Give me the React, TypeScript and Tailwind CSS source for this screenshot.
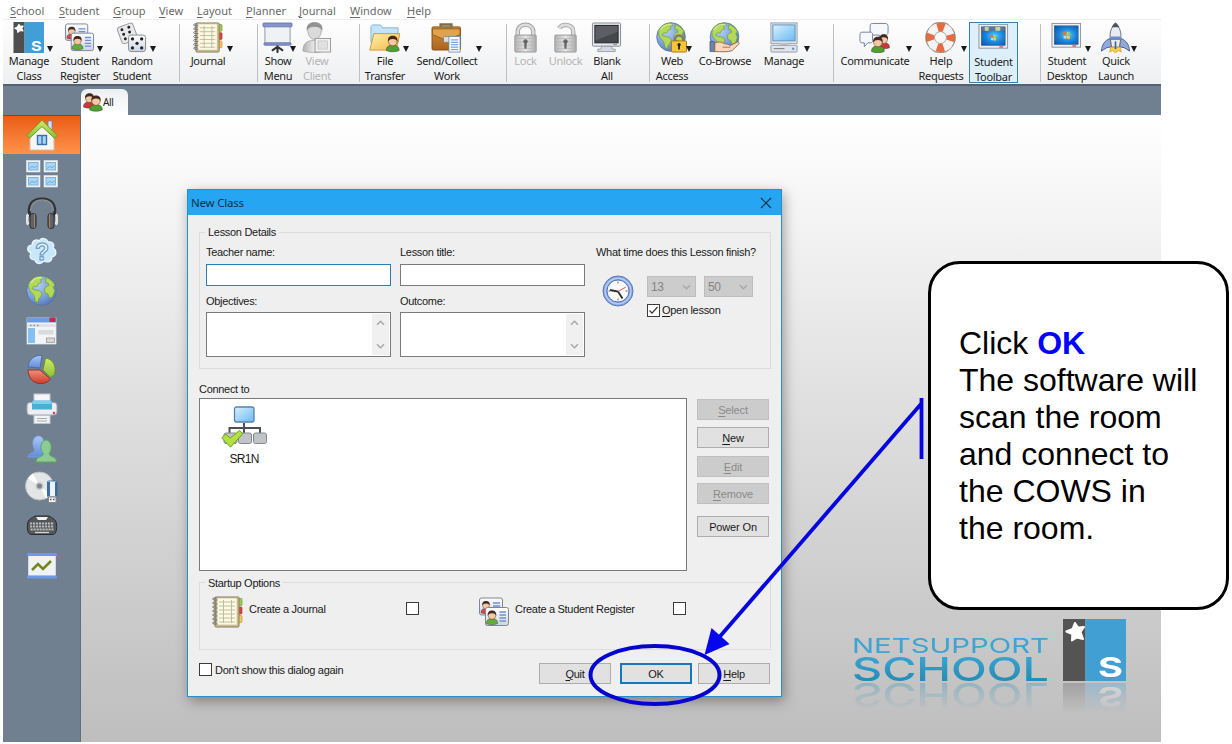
import React from "react";

type IconProps = { children: React.ReactNode; w?: number; h?: number; className?: string };

function Svg({ children, w = 32, h = 32, className = "" }: IconProps) {
  return (
    <svg width={w} height={h} viewBox={`0 0 ${w} ${h}`} className={`block shrink-0 ${className}`}>
      {children}
    </svg>
  );
}

function Defs() {
  return (
    <svg width="0" height="0" className="absolute">
      <defs>
        <radialGradient id="sea" cx="35%" cy="30%" r="75%">
          <stop offset="0" stopColor="#b4cff5" />
          <stop offset="0.6" stopColor="#7ba1e0" />
          <stop offset="1" stopColor="#5878bb" />
        </radialGradient>
        <linearGradient id="screen" x1="0" y1="0" x2="1" y2="1">
          <stop offset="0" stopColor="#d8f1ff" />
          <stop offset="1" stopColor="#6bb9ef" />
        </linearGradient>
        <radialGradient id="desk" cx="55%" cy="50%" r="70%">
          <stop offset="0" stopColor="#5cd0fb" />
          <stop offset="0.5" stopColor="#1a86dc" />
          <stop offset="1" stopColor="#0a55b0" />
        </radialGradient>
        <linearGradient id="folder" x1="0" y1="0" x2="1" y2="1">
          <stop offset="0" stopColor="#fff1b8" />
          <stop offset="1" stopColor="#f3b63c" />
        </linearGradient>
        <linearGradient id="leather" x1="0" y1="0" x2="0" y2="1">
          <stop offset="0" stopColor="#d99238" />
          <stop offset="1" stopColor="#a96420" />
        </linearGradient>
        <linearGradient id="metal" x1="0" y1="0" x2="1" y2="0">
          <stop offset="0" stopColor="#b2b2b2" />
          <stop offset="0.5" stopColor="#e6e6e6" />
          <stop offset="1" stopColor="#ababab" />
        </linearGradient>
        <linearGradient id="card" x1="0" y1="0" x2="0" y2="1">
          <stop offset="0" stopColor="#ffffff" />
          <stop offset="1" stopColor="#cbd5e6" />
        </linearGradient>
        <linearGradient id="lime" x1="0" y1="0" x2="0" y2="1">
          <stop offset="0" stopColor="#d0ec68" />
          <stop offset="1" stopColor="#8dbe37" />
        </linearGradient>
        <linearGradient id="bluefill" x1="0" y1="0" x2="0" y2="1">
          <stop offset="0" stopColor="#a9c6f7" />
          <stop offset="1" stopColor="#5f8cdb" />
        </linearGradient>
        <linearGradient id="redfill" x1="0" y1="0" x2="0" y2="1">
          <stop offset="0" stopColor="#f58f78" />
          <stop offset="1" stopColor="#c83c2c" />
        </linearGradient>
        <linearGradient id="logotext" x1="0" y1="0" x2="0" y2="1">
          <stop offset="0" stopColor="#3fa9d8" />
          <stop offset="1" stopColor="#1f85ae" />
        </linearGradient>
      </defs>
    </svg>
  );
}

function Head({ x, y, s = 1, shirt }: { x: number; y: number; s?: number; shirt: string }) {
  return (
    <g transform={`translate(${x} ${y}) scale(${s})`}>
      <path d="M-6 9c0-4 2.500-5 6-5S6 5 6 9c-3 1.600-9 1.600-12 0z" fill={shirt} stroke="#3c4a2c" strokeWidth="0.500" />
      <circle r="4" cy="0.600" fill="#f3c8a4" stroke="#6b3a20" strokeWidth="0.500" />
      <path d="M-4.400 1C-5-3.500-2.500-4.800 0-4.800s5 1.300 4.400 5.800C3.800-1 2.500-1.800 0-1.800S-3.800-1-4.400 1z" fill="#43291d" />
    </g>
  );
}

const GlobeBody = () => (
  <g>
    <circle cx="15.500" cy="15.500" r="14.800" fill="url(#sea)" stroke="#56749b" strokeWidth="0.800" />
    <path d="M3 8C6 3 10 1.300 15 1.200l2.500 2-3 1.500 1 2.500-3 1.300-1.500 3-3-.5-2 2.500 3 1.500 4 .5 3 3-1.500 3.500-2 2-.5 3.500-2.500-1-1.500-6-3-3.500C3 14.500 2 12 3 8z" fill="#b4d957" stroke="#6f9c37" strokeWidth="0.700" />
    <path d="M20 2.500c4 1.300 7.500 4 9 8l-2 1 1.800 4.500-2.300 6-3 1-1.500-4-3-1-.5-4 2.500-3 2-.5-1-2.500-2.500-.5z" fill="#b4d957" stroke="#6f9c37" strokeWidth="0.700" />
    <path d="M5 8c3-5 8-6 12-5" stroke="#fff" strokeWidth="1.200" opacity="0.450" fill="none" />
  </g>
);

const ClassIcon = () => (
  <Svg>
    <rect x="0.500" y="0" width="11.500" height="32" fill="#4e4e4e" />
    <rect x="12" y="0" width="20" height="32" fill="#419fd6" />
    <path d="M6 2.500l1.600 2 2.900-.4-1.500 2.500 1.300 2.700-3-.5L5 10.600l-.6-2.900-2.500-1.300 2.700-1.200z" fill="#fff" stroke="#fff" strokeWidth="1.200" strokeLinejoin="round" />
    <text x="18.500" y="30" fontFamily="Inter, 'Liberation Sans', sans-serif" fontSize="14" fontWeight="700" letterSpacing="0" fill="#fff" textLength="11" lengthAdjust="spacingAndGlyphs">S</text>
  </Svg>
);

const RegisterIcon = () => (
  <Svg>
    <rect x="1.500" y="2" width="23" height="17" rx="2" fill="url(#card)" stroke="#7f8794" />
    <Head x={8} y={9} s={0.85} shirt="#d9434c" />
    <path d="M15 7h7M15 10h7M15 13h7" stroke="#6f90cd" strokeWidth="1.300" />
    <rect x="7.500" y="11.500" width="23" height="18" rx="2" fill="url(#card)" stroke="#7f8794" />
    <Head x={14} y={19} s={0.95} shirt="#5fae3c" />
    <path d="M21.500 16h6.500M21.500 19h6.500M21.500 22h6.500M21.500 25h6.500" stroke="#6f90cd" strokeWidth="1.300" />
  </Svg>
);

const DiceIcon = () => (
  <Svg>
    <g transform="rotate(-20 11 11)">
      <rect x="3" y="3" width="17" height="18" rx="3" fill="#e9e9eb" stroke="#9a9a9a" />
      <g fill="#222">
        <circle cx="7.500" cy="6.500" r="1.500" /><circle cx="15" cy="6.500" r="1.500" /><circle cx="7.500" cy="11.500" r="1.500" /><circle cx="14" cy="11.500" r="1.500" /><circle cx="7.500" cy="16.500" r="1.500" />
      </g>
    </g>
    <rect x="13" y="13.500" width="17.500" height="17" rx="2.500" fill="url(#card)" stroke="#8b8b8b" />
    <g fill="#222">
      <circle cx="17" cy="17.500" r="1.700" /><circle cx="26.500" cy="17.500" r="1.700" /><circle cx="21.700" cy="22" r="1.700" /><circle cx="17" cy="26.800" r="1.700" /><circle cx="26.500" cy="26.800" r="1.700" />
    </g>
  </Svg>
);

const JournalIcon = () => (
  <Svg>
    <rect x="27" y="2.500" width="4" height="7" rx="1" fill="#9bd04f" stroke="#5d8c2a" strokeWidth="0.600" />
    <rect x="27" y="11" width="4" height="7" rx="1" fill="#d64540" stroke="#9c2b27" strokeWidth="0.600" />
    <rect x="27" y="19.500" width="4" height="7" rx="1" fill="#f4c95a" stroke="#b5872a" strokeWidth="0.600" />
    <rect x="4" y="1" width="24" height="30" rx="1" fill="#d0c295" stroke="#8a7c55" />
    <rect x="6" y="2" width="20" height="27" fill="#fdfae3" stroke="#b9b08f" strokeWidth="0.600" />
    <path d="M8 6h16M8 10h16M8 14h16M8 18h16M8 22h16M8 26h16M12.500 4v23M20.500 4v23" stroke="#b9b798" strokeWidth="0.900" />
    {[4, 8, 12, 16, 20, 24, 28].map((y) => (
      <path key={y} d={`M6.500 ${y}H2.500a1.200 1.200 0 0 1 0-2h3`} fill="none" stroke="#6b6b6b" strokeWidth="1" />
    ))}
  </Svg>
);

const EaselIcon = () => (
  <Svg>
    <rect x="3" y="3" width="26" height="19" fill="#eef2f4" stroke="#8f99a5" />
    <rect x="1" y="1" width="30" height="4" rx="1" fill="#8794ce" stroke="#5f6ba3" strokeWidth="0.800" />
    <rect x="2" y="21.500" width="28" height="2.500" rx="1" fill="#8794ce" stroke="#5f6ba3" strokeWidth="0.800" />
    <path d="M16 25v6M15.500 26l-4.500 3M16.500 26l4.500 3" stroke="#333" strokeWidth="2.200" fill="none" strokeLinecap="round" />
  </Svg>
);

const ViewIcon = () => (
  <Svg>
    <path d="M2 30c0-7 3-10 9-11h4c6 1 9 4 9 11-6 2-16 2-22 0z" fill="url(#metal)" stroke="#9c9c9c" strokeWidth="0.700" />
    <path d="M7 8c0-5 2.500-7.500 7-7.500S21 3 21 8c0 6-3 10-7 10S7 14 7 8z" fill="#dadada" stroke="#9a9a9a" strokeWidth="0.700" />
    <path d="M6 9C5 3 8.500.5 14 .5S23 3 22 9c-2-3-5-4-8-4S7.500 6 6 9z" fill="#929292" />
    <rect x="14.500" y="17" width="16" height="14" fill="#f2f2f2" stroke="#9a9a9a" />
    <rect x="17.500" y="19.500" width="10" height="8.500" fill="#e0e0e0" stroke="#bbb" strokeWidth="0.600" />
  </Svg>
);

const FileIcon = () => (
  <Svg>
    <path d="M2 5l1.500-2H12l2 3h16v15H2z" fill="#c3e3f7" stroke="#7fb0d3" strokeWidth="0.900" />
    <path d="M5 12h27l-4 17H0.800z" fill="url(#folder)" stroke="#c9922d" strokeWidth="0.900" />
    <Head x={24.500} y={19.500} s={1.1} shirt="#4ea02f" />
  </Svg>
);

const BriefcaseIcon = () => (
  <Svg>
    <path d="M10 5V2.500h11V5" fill="none" stroke="#7b6c46" strokeWidth="2.600" />
    <rect x="1" y="5" width="29.500" height="24" rx="1.500" fill="url(#leather)" stroke="#7d4310" strokeWidth="0.800" />
    <path d="M1.500 7h28.500v6L18 18h-4.500L1.500 13z" fill="#e0a24c" stroke="#87501a" strokeWidth="0.800" />
    <path d="M9 5.500h14" stroke="#8c7a4c" strokeWidth="2" />
    <rect x="13" y="15" width="6" height="6" rx="1" fill="#ddd" stroke="#777" strokeWidth="0.700" />
    <rect x="18.500" y="15" width="11.500" height="16" fill="#f8fafc" stroke="#71829b" strokeWidth="0.800" />
    <path d="M20.500 18.500h7.500M20.500 21h7.500M20.500 23.500h7.500M20.500 26h7.500M20.500 28.500h7.500" stroke="#5f8fd0" strokeWidth="1" />
  </Svg>
);

const PadlockIcon = ({ open = false }: { open?: boolean }) => {
  const shackle = open ? "M9.500 6.500c3-5.500 14.500-4.500 14.500 3.500v5" : "M8 15v-5c0-9.500 16-9.500 16 0v5";
  return (
    <Svg>
      <path d={shackle} fill="none" stroke="#a0a0a0" strokeWidth="4.600" />
      <path d={shackle} fill="none" stroke="#dcdcdc" strokeWidth="2.800" />
      <rect x="5" y="13.500" width="22" height="17.500" rx="0.800" fill="url(#metal)" stroke="#999" />
      <path d="M5 17h22M5 20.500h22M5 24h22M5 27.500h22" stroke="#b3b3b3" strokeWidth="0.700" />
      <circle cx="16" cy="20" r="2.300" fill="#666" />
      <path d="M16 20v7.500" stroke="#666" strokeWidth="2.400" />
    </Svg>
  );
};

const MonitorIcon = () => (
  <Svg>
    <rect x="1.500" y="1" width="29" height="24" rx="1.200" fill="#e6e9ef" stroke="#858b96" />
    <rect x="4" y="3.500" width="24" height="18" fill="#45484c" stroke="#222" />
    <path d="M4.500 4h23v6L4.500 19z" fill="#777b80" opacity="0.450" />
    <path d="M11 25h10l1 3h3v2.500H7V28h3z" fill="#d5d8de" stroke="#8b909b" strokeWidth="0.800" />
    <path d="M23 23.300h4" stroke="#888" />
  </Svg>
);

const WebLockIcon = () => (
  <Svg>
    <GlobeBody />
    <path d="M19.500 21v-3c0-5.500 8.500-5.500 8.500 0v3" fill="none" stroke="#857b5e" strokeWidth="2.500" />
    <rect x="16" y="19.500" width="15.500" height="11.500" rx="1" fill="#f6c534" stroke="#a67a17" />
    <circle cx="23.800" cy="23.500" r="1.700" fill="#222" />
    <path d="M23.800 23.500v5" stroke="#222" strokeWidth="1.800" />
  </Svg>
);

const CoBrowseIcon = () => (
  <Svg>
    <g transform="translate(.5 0)"><GlobeBody /></g>
    <path d="M1 20h3.500l1.500 1v9.500H1z" fill="#6d84aa" stroke="#3d5070" strokeWidth="0.700" />
    <path d="M6 21.500c4-1.500 7.500-1 10 1 3 .3 5 .5 5.500 2l7-3.500c2-1 3.500.5 2 2L24 29.500c-5 2-12 1-18 1z" fill="#f7d6ba" stroke="#95603e" strokeWidth="0.900" />
    <path d="M14 26h8" stroke="#95603e" strokeWidth="0.800" />
  </Svg>
);

const PcIcon = () => (
  <Svg>
    <rect x="3" y="1" width="27" height="21" fill="#eceff3" stroke="#939aa5" />
    <rect x="5" y="3" width="23" height="16.500" fill="url(#screen)" stroke="#5d90be" />
    <path d="M12 22h9v2.500h-9z" fill="#c3cad3" />
    <rect x="3" y="24" width="27" height="7" rx="0.800" fill="#e1e5ea" stroke="#939aa5" />
    <path d="M6 27.500h11" stroke="#777" /><circle cx="26" cy="27.500" r="1.300" fill="#5b94d6" />
  </Svg>
);

const ChatIcon = () => (
  <Svg>
    <path d="M14 1.500h13c2 0 3 1 3 3v6c0 2-1 3-3 3h-3l-3 3v-3h-7c-2 0-2.500-1-2.500-3v-6c0-2 .5-3 2.500-3z" fill="#f5f8fd" stroke="#75819b" />
    <path d="M3 10.500h9c1.500 0 2 1 2 2.500v6c0 1.500-.5 2.500-2 2.500H9l-3.500 4V21.500H3c-1.500 0-2-1-2-2.500v-6c0-1.500.5-2.500 2-2.500z" fill="#f5f8fd" stroke="#75819b" />
    <Head x={25.500} y={17.500} s={1} shirt="#d0333c" />
    <Head x={19.500} y={20.500} s={1.1} shirt="#4ea02f" />
  </Svg>
);

const RingIcon = () => (
  <Svg>
    <circle cx="16" cy="16" r="10.700" fill="none" stroke="#9b9d9f" strokeWidth="10" />
    <circle cx="16" cy="16" r="10.700" fill="none" stroke="#f3f3f3" strokeWidth="8.600" />
    <circle cx="16" cy="16" r="10.700" fill="none" stroke="#e56b43" strokeWidth="8.800" strokeDasharray="7 9.807" strokeDashoffset="3.500" />
    <path d="M4 7C0 12 0 20 4 25M28 7c4 5 4 13 0 18M8 2.500c4-3 12-3 16 0M8 29.500c4 3 12 3 16 0" fill="none" stroke="#9b8268" strokeWidth="0.800" />
  </Svg>
);

const DesktopIcon = ({ bar = false }: { bar?: boolean }) => (
  <Svg>
    <rect x="1" y="1.500" width="29.500" height="24.500" fill="#eff1f4" stroke="#90959e" />
    <rect x="3.500" y="4" width="24.500" height="19" fill="url(#desk)" stroke="#33597e" strokeWidth="0.700" />
    {bar && <path d="M4 4h23.500v4H4z" fill="#62758f" />}
    {bar && <path d="M7 4h4v4H7zM18 4h5v4h-5z" fill="#c4d69a" />}
    <g transform={bar ? "translate(3 4) scale(.8)" : ""}>
      <path d="M12.500 10.500l3-.8v3.500l-3 .4z" fill="#e8703a" /><path d="M16.300 9.700l3 1v3h-3z" fill="#a8d658" /><path d="M13 14.500l2.700-.3v3.200l-2.700-.5z" fill="#b4defa" /><path d="M16.300 14.400h3v3.200l-3-.5z" fill="#f7d34a" />
    </g>
    <path d="M22 24.700h4" stroke="#d04040" strokeWidth="1.200" />
  </Svg>
);

const RocketIcon = () => (
  <Svg>
    <path d="M10.500 17C5 19 2 23 1.500 30l5.500-3.500 5-1zM21.500 17c5.500 2 8.500 6 9 13L25 26.500l-5-1z" fill="#90aada" stroke="#4a5e90" />
    <path d="M16 1.500c4.500 4 6 9 5.500 15L20 26h-8l-1.500-9.500C10 10.500 11.500 5.500 16 1.500z" fill="#e8ecf1" stroke="#656e7c" />
    <path d="M16 .5c2 1.300 3.200 3 4 5h-8c.8-2 2-3.700 4-5z" fill="#4d5560" />
    <path d="M10.800 15h10.500v3.500H11.200z" fill="#6e89c8" />
    <path d="M11 26h10l1 5-3-1.500-3 2.500-3-2.500-3 1.500z" fill="#f8d048" stroke="#ce942b" strokeWidth="0.700" />
    <path d="M16 20v8" stroke="#4a5e90" strokeWidth="1.700" />
  </Svg>
);

type Tool = { label: string[]; icon?: React.ReactNode; width: string; arrow?: string; muted?: boolean; active?: boolean };
const sep = (width: string): Tool => ({ label: [], width });

const tools: Tool[] = [
  { label: ["Manage", "Class"], icon: <ClassIcon />, width: "w-[52px]", arrow: "left-[44px]" },
  { label: ["Student", "Register"], icon: <RegisterIcon />, width: "w-[50px]", arrow: "left-[42px]" },
  { label: ["Random", "Student"], icon: <DiceIcon />, width: "w-[54px]", arrow: "left-[45px]" },
  sep("w-[21px]"),
  { label: ["Journal"], icon: <JournalIcon />, width: "w-[56px]", arrow: "left-[47px]" },
  sep("w-[22px]"),
  { label: ["Show", "Menu"], icon: <EaselIcon />, width: "w-[40px]", arrow: "left-[32px]" },
  { label: ["View", "Client"], icon: <ViewIcon />, width: "w-[38px]", muted: true },
  sep("w-[24px]"),
  { label: ["File", "Transfer"], icon: <FileIcon />, width: "w-[50px]", arrow: "left-[43px]" },
  { label: ["Send/Collect", "Work"], icon: <BriefcaseIcon />, width: "w-[74px]", arrow: "left-[66px]" },
  sep("w-[23px]"),
  { label: ["Lock"], icon: <PadlockIcon />, width: "w-[37px]", muted: true },
  { label: ["Unlock"], icon: <PadlockIcon open />, width: "w-[43px]", muted: true },
  { label: ["Blank", "All"], icon: <MonitorIcon />, width: "w-[40px]" },
  sep("w-[23px]"),
  { label: ["Web", "Access"], icon: <WebLockIcon />, width: "w-[44px]", arrow: "left-[36px]" },
  { label: ["Co-Browse"], icon: <CoBrowseIcon />, width: "w-[62px]" },
  { label: ["Manage"], icon: <PcIcon />, width: "w-[56px]", arrow: "left-[48px]" },
  sep("w-[22px]"),
  { label: ["Communicate"], icon: <ChatIcon />, width: "w-[82px]", arrow: "left-[72px]" },
  { label: ["Help", "Requests"], icon: <RingIcon />, width: "w-[50px]", arrow: "left-[45px]" },
  { label: ["Student", "Toolbar"], icon: <DesktopIcon bar />, width: "ml-[3px] w-[49px]", active: true },
  sep("w-[23px]"),
  { label: ["Student", "Desktop"], icon: <DesktopIcon />, width: "w-[52px]", arrow: "left-[44px]" },
  { label: ["Quick", "Launch"], icon: <RocketIcon />, width: "w-[46px]", arrow: "left-[38px]" },
];

function Toolbar() {
  return (
    <div className="flex h-[67px] shrink-0 border-t border-b-2 border-t-[#eeeeee] border-b-[#506273] bg-linear-to-b from-[#fefefe] to-[#eeeff1] pt-[2px] font-['Noto_Sans','Open_Sans',sans-serif] text-[11px] leading-[14.500px] tracking-[-0.300px] text-[#1c1c1c]">
      {tools.map((t, i) =>
        t.icon ? (
          <div key={i} className={`relative flex h-[61px] shrink-0 flex-col items-center whitespace-nowrap ${t.width} ${t.muted ? "text-[#b4b4b4]" : ""} ${t.active ? "bg-[#dceffa] outline outline-[#2f84ab] -outline-offset-1" : ""}`}>
            <span className={`mb-[1px] -ml-[1px] [&>svg]:h-[31px] [&>svg]:w-[31px] ${t.active ? "translate-y-[1px]" : ""}`}>{t.icon}</span>
            {t.label.map((l) => (
              <span key={l} className={t.active ? "translate-y-[1px]" : ""}>{l}</span>
            ))}
            {t.arrow && (
              <span className={`absolute top-[24px] h-0 w-0 border-x-[3.500px] border-t-[6px] border-x-transparent border-t-[#1a1a1a] ${t.arrow}`} />
            )}
          </div>
        ) : (
          <div key={i} className={`mt-[2px] h-[58px] shrink-0 border-r border-[#bfbfc3] ${t.width}`} />
        ),
      )}
    </div>
  );
}

const menus = [
  ["School", "w-[49px]"],
  ["Student", "w-[54px]"],
  ["Group", "w-[46px]"],
  ["View", "w-[38px]"],
  ["Layout", "w-[49px]"],
  ["Planner", "w-[53px]"],
  ["Journal", "w-[51px]"],
  ["Window", "w-[57px]"],
  ["Help", "w-[30px]"],
];

const sideIcons: React.ReactNode[] = [
  <Svg>
    <path d="M22 2h4v9h-4z" fill="#d7e2f2" stroke="#6987b8" strokeWidth="0.800" />
    <path d="M4 15L16 4l12 11v16H4z" fill="#f6f6f2" stroke="#c7c2b0" />
    <path d="M.8 16.500L16 1.200l15.200 15.300-2.700 2.700L16 7.500 3.500 19.200z" fill="url(#lime)" stroke="#6f9b22" />
    <rect x="11.500" y="16.500" width="9" height="9" fill="#a9d4f8" stroke="#3a6fae" strokeWidth="1.400" />
    <path d="M16 16.500v9" stroke="#3a6fae" strokeWidth="1.400" />
  </Svg>,
  <Svg h={28}>
    {[[0.5, 0.5], [18, 0.5], [0.5, 15.5], [18, 15.5]].map(([x, y], i) => (
      <g key={i}>
        <rect x={x} y={y} width="13.500" height="11.500" fill="#f2f5f8" stroke="#dfe5ea" strokeWidth="0.600" />
        <rect x={x + 2} y={y + 2} width="9.500" height="7.500" fill="#a9d6f5" stroke="#7fb1dc" />
        <path d={`M${x + 3} ${y + 8}l2.500-2 2.500 1 2.500-1.500`} stroke="#6ba4d8" strokeWidth="0.900" fill="none" />
      </g>
    ))}
  </Svg>,
  <Svg>
    <path d="M4 20C1 7 7 2 16 2s15 5 12 18" fill="none" stroke="#303235" strokeWidth="3" />
    <path d="M4.500 14C5 6 9 3 16 3s11 3 11.500 11" fill="none" stroke="#8b8d90" strokeWidth="1.400" />
    <path d="M2.500 17.500c-2 1-2 8 0 10M29.500 17.500c2 1 2 8 0 10" stroke="#e3e3e3" strokeWidth="3" fill="none" />
    <rect x="4" y="16.500" width="6" height="15" rx="2.700" fill="#606265" stroke="#2b2d2f" />
    <rect x="22" y="16.500" width="6" height="15" rx="2.700" fill="#606265" stroke="#2b2d2f" />
    <path d="M8.500 17v14M23.500 17v14" stroke="#b98b6a" strokeWidth="0.800" />
  </Svg>,
  <Svg h={30}>
    <path d="M6 8c0-5 5-6 7-4 2-4 8-3 9 1 5-1 7 3 5 6 4 2 4 8-1 9 0 5-5 6-8 4-3 4-8 3-9-1-5 0-6-4-4-7-5-2-4-8 1-8z" fill="#c9e7fa" stroke="#eef8fe" strokeWidth="1.200" />
    <text x="16" y="23" textAnchor="middle" fontFamily="'Liberation Sans', sans-serif" fontSize="23" fontWeight="700" fill="#e7f4fd" stroke="#5f8ec0" strokeWidth="1">?</text>
  </Svg>,
  <Svg><GlobeBody /></Svg>,
  <Svg h={28}>
    <rect x="1" y="1" width="29" height="26" fill="#f2f4f7" stroke="#dfe4ea" strokeWidth="0.700" />
    <rect x="1" y="1" width="29" height="4.500" fill="#6d9be0" />
    <rect x="23.500" y="0.500" width="6" height="4.500" rx="1" fill="#c3294a" />
    <path d="M1 8.500h29" stroke="#dfe2e7" strokeWidth="3" /><path d="M4 8.500h9" stroke="#7e8fa8" strokeWidth="1.500" strokeDasharray="1.500 2" />
    <rect x="2" y="11" width="7" height="15" fill="#86c0f0" />
    <rect x="12.500" y="13" width="15" height="4.500" fill="#dadada" /><rect x="20.500" y="21" width="8" height="4.500" fill="#d8d8d0" stroke="#999" strokeWidth="0.800" />
  </Svg>,
  <Svg>
    <path d="M14 14L2 13C3 5 8 1 16 1.500z" fill="url(#bluefill)" stroke="#4c68a0" strokeWidth="0.900" />
    <path d="M17 16L19.500 4c8 1.500 11 8 9 16.500l-4 3z" fill="url(#lime)" stroke="#668e26" strokeWidth="0.900" />
    <path d="M2 16h12l10.500 9C18 33 3 31 2 16z" fill="url(#redfill)" stroke="#8e2c22" strokeWidth="0.900" />
  </Svg>,
  <Svg>
    <rect x="8" y="1" width="16" height="9" fill="#f4f6f8" stroke="#c2c8d0" />
    <rect x="1" y="9.500" width="30" height="12.500" rx="3" fill="#eceef2" stroke="#9ca4b0" />
    <path d="M6 7.500h20v9H6z" fill="#48b0d5" />
    <path d="M6.500 8h19v3h-19z" fill="#7fd0ea" />
    <rect x="8" y="22.500" width="16" height="8" fill="#f2f3f5" stroke="#bfc3c9" />
    <path d="M11 25.500h10M11 28h10" stroke="#a6aab0" /><circle cx="28" cy="20" r="1.300" fill="#d2425a" />
  </Svg>,
  <Svg h={29}>
    <path d="M2 23c1-5 6-3 7-7-4-6-2-14 3.500-14S19 9 16 16c1 3 4 3 4 7z" fill="url(#bluefill)" stroke="#7fa4e3" strokeWidth="0.800" />
    <path d="M10 28c0-6 6-4.500 7.500-8-5-6-2-14 2.500-14s7.500 8 3 14c1.500 3.500 7.500 2 7.500 8z" fill="#8ecb93" stroke="#5aa36b" />
  </Svg>,
  <Svg w={33}>
    <circle cx="14.500" cy="15" r="14" fill="#e4e5e6" stroke="#bcbcbc" />
    <path d="M14.500 15L3 7.500A14 14 0 0 1 8 2.500zM14.500 15l11 7.500a14 14 0 0 1-4.500 5z" fill="#fff" />
    <circle cx="14.500" cy="15" r="3.300" fill="#7d8790" stroke="#ccc" strokeWidth="1.500" />
    <rect x="22.500" y="10" width="9.500" height="16" rx="1" fill="#eef4fa" stroke="#3a6ea5" />
    <path d="M24 11v14M31 11v14" stroke="#2f6199" strokeWidth="1.800" /><rect x="23.500" y="26" width="7.500" height="5.500" fill="#f5f5f5" stroke="#888" />
    <path d="M25 28.500h1.500M28 28.500h1.500" stroke="#555" strokeWidth="1.500" />
  </Svg>,
  <Svg h={22}>
    <path d="M9 1h14c3 2 7 3 7.500 8 .5 5 0 9-3 10.500H4.500C1.500 18 1 14 1.500 9 2 4 6 3 9 1z" fill="#54575a" stroke="#2a2b2d" />
    <path d="M10 2h12l-2 3h-8z" fill="#f2f2f2" />
    <path d="M4 8.500h24M4 11.500h24M4.500 14.500h23" stroke="#b9b9b9" strokeWidth="1.900" strokeDasharray="2.200 0.800" />
    <path d="M9 17.500h14" stroke="#d5d5d5" strokeWidth="1.300" />
  </Svg>,
  <Svg h={28}>
    <rect x="2.500" y="3" width="27" height="21" fill="#f0f3f5" stroke="#d3d9df" />
    <rect x="1" y="1" width="30" height="3" rx="1" fill="#6f98e4" /><rect x="1" y="23.500" width="30" height="3" rx="1" fill="#6f98e4" />
    <path d="M6 18l6-6 5 5 8-8" fill="none" stroke="#76861e" strokeWidth="2.600" />
  </Svg>,
];

function Check({ on = false }: { on?: boolean }) {
  return (
    <span className="flex h-[13px] w-[13px] shrink-0 items-center justify-center border border-[#3b3b3b] bg-white">
      {on && (
        <svg width="11" height="11" viewBox="0 0 11 11"><path d="M1.500 5.500L4 8.200 9.500 2" fill="none" stroke="#333" strokeWidth="1.200" /></svg>
      )}
    </span>
  );
}

function Button({ label, u = 0, state = "normal", className = "" }: { label: string; u?: number; state?: "normal" | "off" | "primary"; className?: string }) {
  const look =
    state === "off"
      ? "border-[#bfbfbf] bg-[#cccccc] text-[#8a8a8a] border"
      : state === "primary"
        ? "border-[#1878b8] bg-[#e1e1e1] border-2"
        : "border-[#adadad] bg-[#e1e1e1] border";
  return (
    <button className={`flex h-[21px] w-[72px] shrink-0 items-center justify-center ${look} ${className}`}>
      <span>
        {u >= 0 ? <span className="underline underline-offset-2">{label[u]}</span> : null}
        {label.slice(u >= 0 ? 1 : 0)}
      </span>
    </button>
  );
}

function Chevron({ up = false, className = "" }: { up?: boolean; className?: string }) {
  return (
    <svg width="9" height="6" viewBox="0 0 9 6" className={className}>
      <path d={up ? "M1 4.800L4.500 1.300 8 4.800" : "M1 1.200l3.500 3.500L8 1.200"} fill="none" stroke="#a8a8a8" strokeWidth="1.500" />
    </svg>
  );
}

function Field({ title, area, focus = false }: { title: string; area: string; focus?: boolean }) {
  return (
    <div className="flex w-[185px] flex-col">
      <span className="h-[16px]">{title}</span>
      <div className={`mt-[4px] h-[22px] border bg-white ${focus ? "border-[#2a7fb5]" : "border-[#7a7a7a]"}`} />
      <span className="mt-[7px] h-[16px]">{area}</span>
      <div className="mt-[3px] flex h-[45px] justify-end border border-[#7a7a7a] bg-white p-px">
        <div className="flex w-[17px] flex-col items-center justify-between bg-[#f0f0f0] py-[6px]">
          <Chevron up />
          <Chevron />
        </div>
      </div>
    </div>
  );
}

function Combo({ value }: { value: string }) {
  return (
    <div className="flex h-[21px] w-[49px] items-center justify-between border border-[#bdbdbd] bg-[#cccccc] pr-[4px] pl-[3px] text-[12px] text-[#858585]">
      {value}
      <Chevron />
    </div>
  );
}

function Dialog() {
  return (
    <div className="absolute top-[189px] left-[187px] flex h-[508px] w-[595px] flex-col border border-[#2b8fc7] bg-[#efefef] font-['Liberation_Sans',Arial,sans-serif] text-[11px] leading-[16px] tracking-[-0.300px] text-[#1a1a1a] shadow-[2px_4px_12px_rgba(0,0,0,0.35)]">
      <div className="flex h-[25px] shrink-0 items-center justify-between bg-[#26a5f2] pr-[9px] pl-[3px] font-['Noto_Sans','Open_Sans',sans-serif] text-[11.500px] tracking-[-0.200px] text-[#0c2f4a]">
        <span>New Class</span>
        <svg width="12" height="12" viewBox="0 0 12 12"><path d="M1 1l10 10M11 1L1 11" stroke="#12334d" strokeWidth="1.200" /></svg>
      </div>

      <div className="relative mt-[17px] mr-[10px] ml-[11px] flex h-[137px] shrink-0 border border-[#dcdcdc] pt-[11px] pl-[6px]">
        <span className="absolute -top-[9px] left-[5px] bg-[#efefef] px-[3px]">Lesson Details</span>
        <Field title="Teacher name:" area="Objectives:" focus />
        <div className="w-[9px]" />
        <Field title="Lesson title:" area="Outcome:" />
        <div className="ml-[11px] flex flex-col whitespace-nowrap">
          <span>What time does this Lesson finish?</span>
          <div className="flex pt-[15px] pl-[6px]">
            <Svg>
              <circle cx="16" cy="16" r="15" fill="#84a4e2" stroke="#5878b8" />
              <circle cx="16" cy="16" r="12.800" fill="none" stroke="#b6ccf5" strokeWidth="1.500" />
              <circle cx="16" cy="16" r="11" fill="#fafafa" stroke="#5673ad" />
              <path d="M8 15l8 1.500 4.500 7" fill="none" stroke="#2b2b2b" strokeWidth="1.800" />
              <path d="M16 16.500l8-4.500" stroke="#d55" strokeWidth="0.900" />
              <path d="M16 6.500v2M16 23.500v2M6.500 16h2M23.500 16h2" stroke="#666" />
            </Svg>
            <div className="flex flex-col pt-[1px] pl-[13px]">
              <div className="flex gap-[8px]">
                <Combo value="13" />
                <Combo value="50" />
              </div>
              <div className="mt-[5px] flex items-center gap-[2px]">
                <Check on />
                <span><span className="underline underline-offset-2">O</span>pen lesson</span>
              </div>
            </div>
          </div>
        </div>
      </div>

      <div className="mt-[12px] ml-[11px] h-[16px] shrink-0">Connect to</div>
      <div className="mt-[1px] ml-[11px] flex shrink-0">
        <div className="flex h-[173px] w-[488px] flex-col border border-[#7a7a7a] bg-white pt-[7px] pl-[21px]">
          <div className="flex w-[46px] flex-col items-center">
            <Svg w={46} h={42}>
              <path d="M23 17v7M8.500 28v-6h30.500V28M23 22v7" fill="none" stroke="#4c5054" strokeWidth="2" />
              <rect x="13.500" y="1" width="19.500" height="15" rx="2" fill="url(#screen)" stroke="#5583ad" strokeWidth="1.300" />
              <rect x="3" y="27" width="13" height="10.500" rx="2" fill="#c1c4c7" stroke="#85898c" />
              <rect x="17.500" y="27" width="13" height="10.500" rx="2" fill="#c1c4c7" stroke="#85898c" />
              <rect x="32.500" y="27" width="13" height="10.500" rx="2" fill="#c1c4c7" stroke="#85898c" />
              <path d="M.8 32l3.700-4 4.800 4 9.200-7.500 3.200 3.300L9.500 41.200z" fill="#b2e040" stroke="#6f9f22" strokeLinejoin="round" />
            </Svg>
            <span className="mt-[3px] text-[12px] tracking-[-0.700px]">SR1N</span>
          </div>
        </div>
        <div className="flex flex-col pt-[1px] pl-[10px] tracking-[-0.150px]">
          <Button label="Select" state="off" />
          <Button label="New" className="mt-[7px]" />
          <Button label="Edit" state="off" className="mt-[8px]" />
          <Button label="Remove" state="off" className="mt-[6px]" />
          <Button label="Power On" u={-1} className="mt-[12px]" />
        </div>
      </div>

      <div className="relative mt-[11px] mr-[10px] ml-[11px] flex h-[68px] shrink-0 items-start border border-[#dcdcdc] pt-[13px] pl-[11px]">
        <span className="absolute -top-[8px] left-[5px] bg-[#efefef] px-[3px]">Startup Options</span>
        <JournalIcon />
        <span className="mt-[5px] ml-[6px] w-[157px]">Create a Journal</span>
        <span className="mt-[6px]"><Check /></span>
        <span className="ml-[59px]"><RegisterIcon /></span>
        <span className="mt-[5px] ml-[5px] w-[158px]">Create a Student Register</span>
        <span className="mt-[6px]"><Check /></span>
      </div>

      <div className="mt-[13px] ml-[11px] flex items-start">
        <Check />
        <span className="-mt-[1px] ml-[3px] w-[324px]">Don't show this dialog again</span>
        <Button label="Quit" />
        <Button label="OK" u={-1} state="primary" className="ml-[9px]" />
        <Button label="Help" className="ml-[6px]" />
      </div>
    </div>
  );
}

function Logo() {
  return (
    <svg
      width="276"
      height="62"
      viewBox="0 0 276 62"
      className="absolute top-[619px] left-[852px] [-webkit-box-reflect:below_2px_linear-gradient(transparent_52%,rgba(0,0,0,0.3))]"
    >
      <g fontFamily="Inter, 'Liberation Sans', sans-serif">
        <text x="0" y="34" fontSize="20.500" fontWeight="400" fill="#3fa4d3" textLength="197" lengthAdjust="spacingAndGlyphs">NETSUPPORT</text>
        <text x="0" y="61.500" fontSize="32.500" fontWeight="500" fill="url(#logotext)" textLength="197" lengthAdjust="spacingAndGlyphs">SCHOOL</text>
        <rect x="211" y="0" width="22.500" height="62" fill="#545454" />
        <rect x="233.500" y="0" width="40.500" height="62" fill="#429fd4" />
        <text x="246" y="58" fontSize="27" fontWeight="700" fill="#fff" textLength="25" lengthAdjust="spacingAndGlyphs">S</text>
      </g>
      <path d="M223 4l3 4.500 6-.5-3.500 5 2.500 7-6-1.500-5 3 .3-6.500-6-2.500 6.300-2.700z" fill="#fff" stroke="#fff" strokeWidth="2" strokeLinejoin="round" />
    </svg>
  );
}

export default function App() {
  return (
    <div className="relative h-[744px] w-[1232px] overflow-hidden bg-white">
      <Defs />
      <div className="ml-[3px] flex h-[742px] w-[1158px] flex-col">
        <div className="flex h-[19px] shrink-0 pl-[7px] font-['Noto_Sans','Open_Sans',sans-serif] text-[11px] leading-[21px] text-[#696969]">
          {menus.map(([m, w]) => (
            <span key={m} className={w}><span className="underline underline-offset-2">{m[0]}</span>{m.slice(1)}</span>
          ))}
        </div>
        <Toolbar />
        <div className="flex h-[29px] shrink-0 items-end bg-[#708090] pl-[78px]">
          <div className="flex h-[26px] w-[47px] items-center rounded-t-[6px] bg-linear-to-b from-[#eceff2] to-white pl-[2px] font-['Noto_Sans','Open_Sans',sans-serif] text-[10px] tracking-[-0.300px] text-[#222]">
            <Svg w={20} h={20}>
              <Head x={6.500} y={6} s={1} shirt="#d0333c" />
              <Head x={13} y={8.500} s={1.05} shirt="#4ea02f" />
            </Svg>
            All
          </div>
        </div>
        <div className="flex min-h-0 flex-1">
          <nav className="flex w-[78px] shrink-0 flex-col border-r border-[#5f6f7f] bg-[#708090]">
            {sideIcons.map((icon, i) => (
              <div key={i} className={`flex h-[39.200px] shrink-0 items-center justify-center ${i === 0 ? "border-t border-[#a8350c] bg-linear-to-b from-[#ea5c14] to-[#ff9248]" : ""}`}>
                {icon}
              </div>
            ))}
          </nav>
          <main className="flex-1 bg-linear-to-b from-white via-[#dddddd] to-[#bebebe]" />
        </div>
      </div>

      <Logo />
      <Dialog />

      <div className="absolute top-[261px] left-[928px] h-[349px] w-[301px] rounded-[32px] border-[3px] border-black bg-white pt-[61px] pl-[28px] font-['Liberation_Sans',Arial,sans-serif] text-[32px] leading-[37px] whitespace-nowrap text-black">
        <p>Click <b className="text-[#0000ff]">OK</b></p>
        <p>The software will</p>
        <p>scan the room</p>
        <p>and connect to</p>
        <p>the COWS in</p>
        <p>the room.</p>
      </div>

      <svg width="360" height="320" viewBox="580 390 360 320" className="absolute top-[390px] left-[580px]">
        <path d="M921.500 398v61M921 404L716 641" stroke="#0505e0" strokeWidth="3.800" fill="none" />
        <path d="M704.500 655l7-27 18 16z" fill="#0505ee" />
        <ellipse cx="655" cy="675" rx="64.500" ry="29" fill="none" stroke="#0505d0" strokeWidth="4" />
      </svg>
    </div>
  );
}
